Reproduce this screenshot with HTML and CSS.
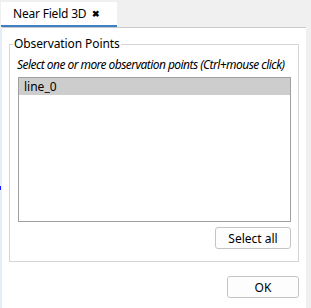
FILE: index.html
```html
<!DOCTYPE html>
<html lang="en">
<head>
    <meta charset="UTF-8">
    <title>Near Field 3D</title>
    <link rel="stylesheet" href="styles.css">
</head>
<body>
<div class="edge">
    <div class="edge-mark"></div>
</div>
<div class="main">
    <div class="tabbar">
        <div class="tab">
            <span class="tab-title">Near Field 3D</span>
            <span class="tab-close">&#x2716;</span>
        </div>
    </div>
    <div class="panel">
        <fieldset class="group">
            <legend>Observation Points</legend>
            <div class="hint">Select one or more observation points (Ctrl+mouse click)</div>
            <div class="list">
                <div class="list-item selected">line_0</div>
            </div>
            <div class="group-actions">
                <button type="button" class="btn btn-select">Select all</button>
            </div>
        </fieldset>
        <div class="actions">
            <button type="button" class="btn btn-ok">OK</button>
        </div>
    </div>
</div>
</body>
</html>
```

FILE: styles.css
```css
html, body {
    height: 100%;
}

body {
    margin: 0;
    background: #f0f0f0;
    font-family: "Noto Sans", "Liberation Sans", sans-serif;
    font-size: 12px;
    color: #000;
    display: flex;
    overflow: hidden;
}

.edge {
    width: 2px;
    margin-top: 28px;
    background: #e6edf7;
}

.edge-mark {
    width: 1px;
    height: 4px;
    margin-top: 158px;
    background: #1a1aff;
}

.main {
    width: 304px;
    display: flex;
    flex-direction: column;
}

.tabbar {
    height: 27px;
    border-bottom: 1px solid #cacaca;
    display: flex;
    align-items: flex-end;
}

.tab {
    width: 116px;
    height: 25px;
    margin-left: -1px;
    background: #fff;
    border-bottom: 2px solid #3c7fc4;
    display: flex;
    align-items: center;
    box-sizing: border-box;
    padding: 0 0 1px 12px;
}

.tab-title {
    margin-right: 6px;
    letter-spacing: -0.2px;
}

.tab-close {
    font-size: 9px;
    font-weight: bold;
}

.panel {
    flex: 1;
    background: #fff;
    padding: 8px 7px 0 7px;
    display: flex;
    flex-direction: column;
}

.group {
    margin: 0;
    padding: 0 7px 12px 7px;
    border: 1px solid #d5d5d5;
    min-width: 0;
}

.group legend {
    padding: 0 1px;
    margin-left: -4px;
    line-height: 16px;
    letter-spacing: -0.1px;
}

.hint {
    font-style: italic;
    line-height: 16px;
    margin: 5px 0 4px 0;
    white-space: nowrap;
    letter-spacing: -0.55px;
}

.list {
    height: 143px;
    border: 1px solid #a0a0a0;
    margin-left: 1px;
}

.list-item {
    height: 17px;
    line-height: 17px;
    padding-left: 5px;
}

.list-item.selected {
    background: #cdcdcd;
}

.group-actions {
    display: flex;
    justify-content: flex-end;
    margin-top: 5px;
}

.btn {
    font-family: inherit;
    font-size: 12px;
    height: 22px;
    box-sizing: border-box;
    background: #fdfdfd;
    border: 1px solid #c4c4c4;
    border-radius: 3px;
    padding: 0;
    color: #000;
}

.btn-select {
    width: 76px;
}

.actions {
    display: flex;
    justify-content: flex-end;
    margin-top: 14px;
}

.btn-ok {
    width: 72px;
}
```
